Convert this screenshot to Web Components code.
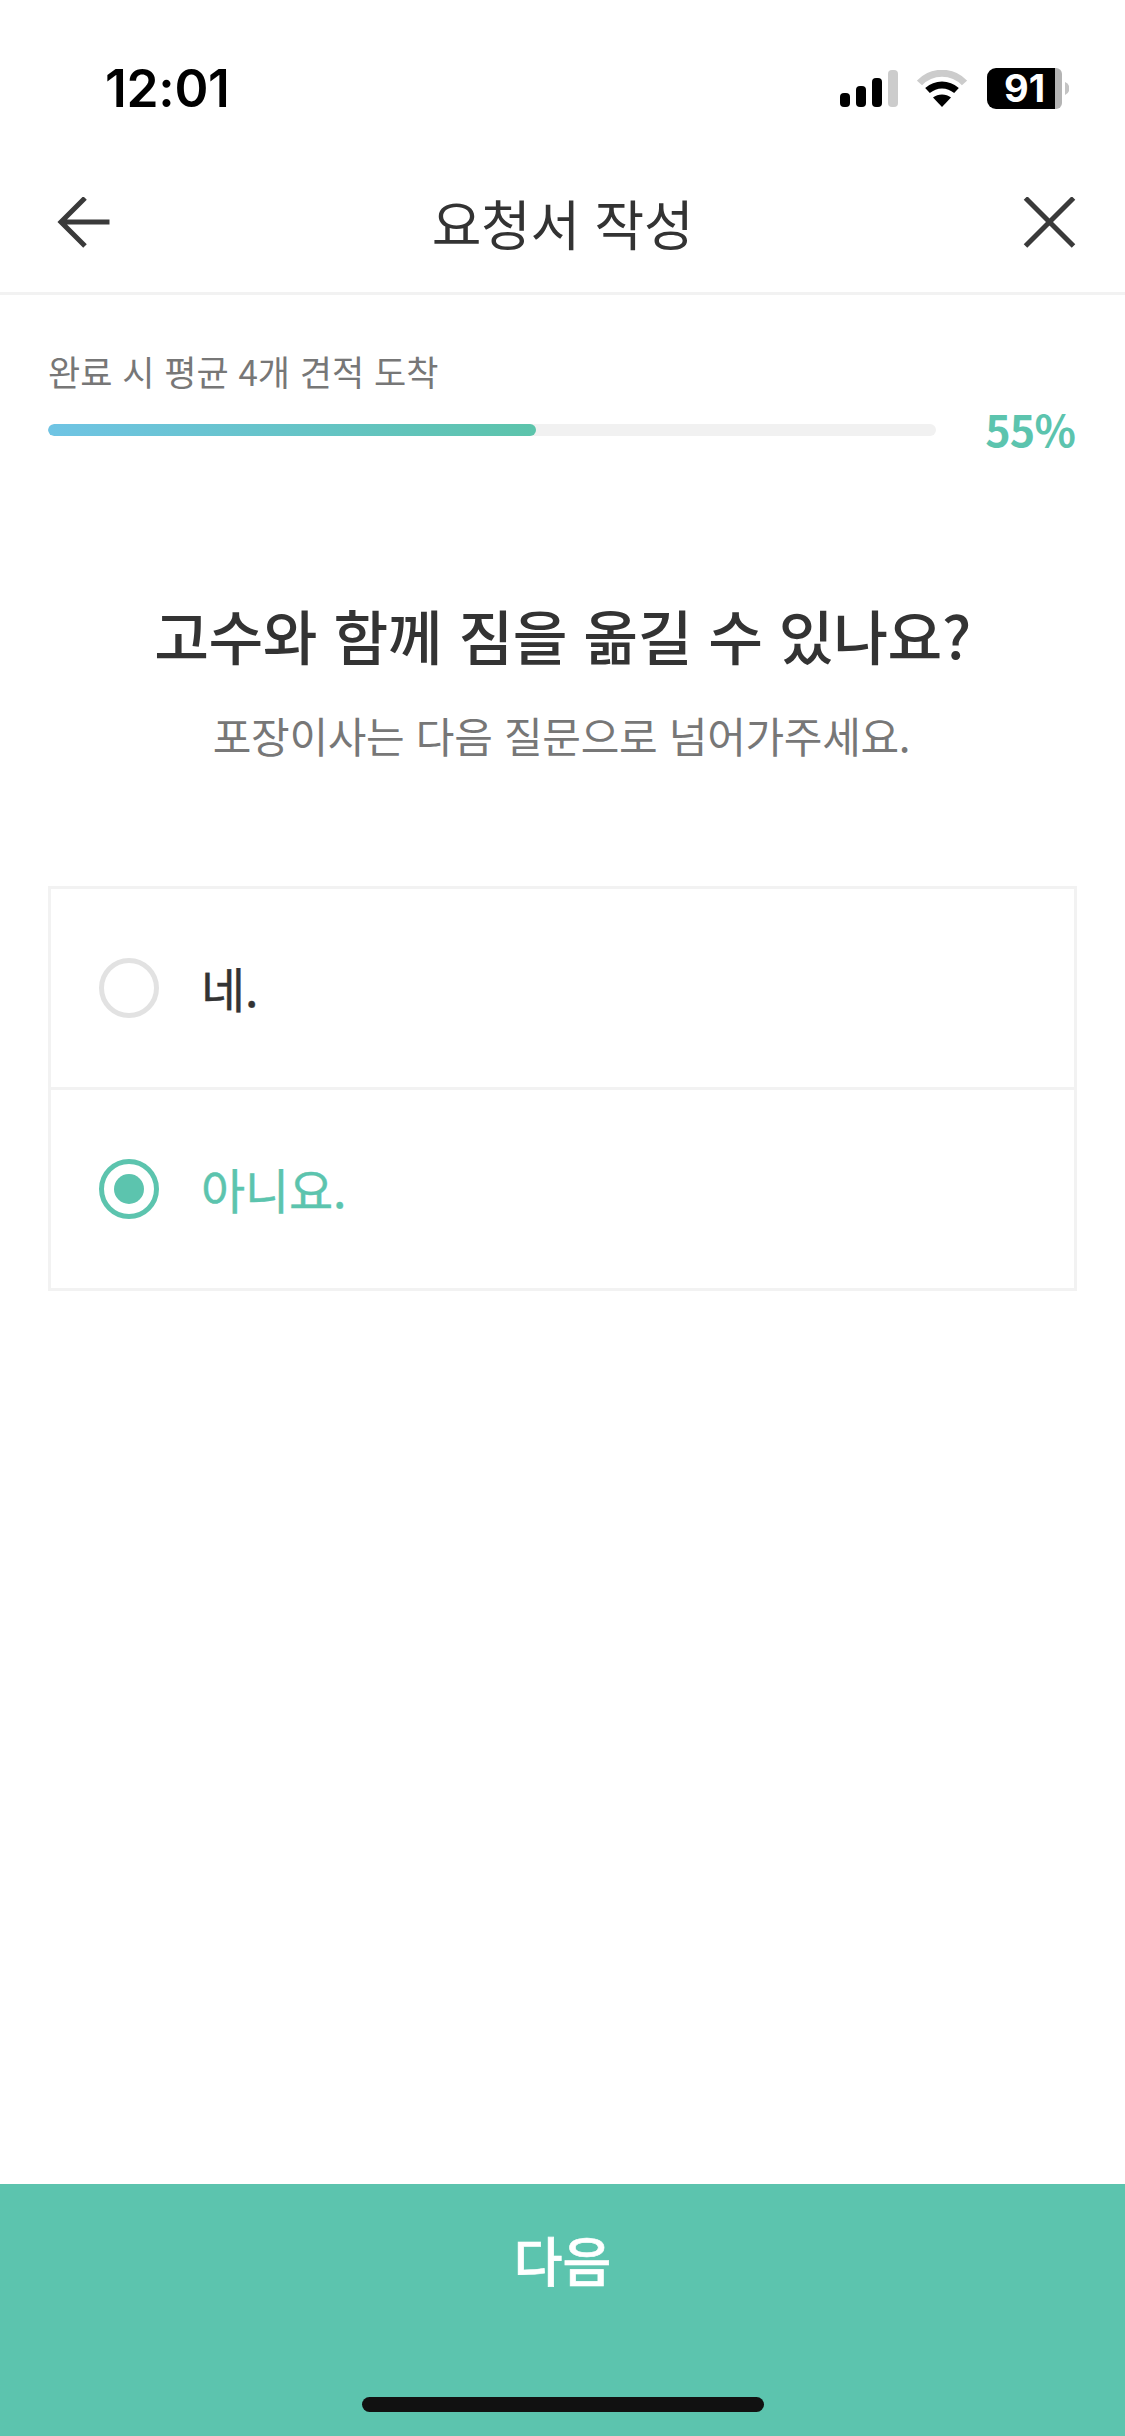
<!DOCTYPE html>
<html lang="ko"><head><meta charset="utf-8"><title>요청서 작성</title>
<style>
html,body{margin:0;padding:0;background:#fff}
body{width:1125px;height:2436px;font-family:"Noto Sans CJK KR","Noto Sans",sans-serif;overflow:hidden}
app-page{height:2436px}
</style></head><body>
<app-page>
  <status-bar time="12:01" battery="91"></status-bar>
  <nav-header>요청서 작성</nav-header>
  <progress-panel label="완료 시 평균 4개 견적 도착" value="55"></progress-panel>
  <question-block heading="고수와 함께 짐을 옮길 수 있나요?" sub="포장이사는 다음 질문으로 넘어가주세요."></question-block>
  <option-list>
    <option-row>네.</option-row>
    <option-row selected>아니요.</option-row>
  </option-list>
  <bottom-cta>다음</bottom-cta>
</app-page>
<script>
function def(name, css, html){
  customElements.define(name, class extends HTMLElement{
    connectedCallback(){
      if(this.shadowRoot) return;
      const r=this.attachShadow({mode:'open'});
      r.innerHTML='<style>'+css+'</style>'+(typeof html==='function'?html(this):html);
    }
  });
}
def('app-page',':host{display:flex;flex-direction:column;width:1125px;background:#fff}','<slot></slot>');
def('status-bar',`
 :host{display:flex;align-items:center;height:176px;box-sizing:border-box;padding:0 56px 0 105px;color:#000;flex:none}
 .in{display:flex;align-items:center;width:100%;height:41px}
 .t{font:600 51.5px/41px Inter,"Liberation Sans",sans-serif;letter-spacing:-.3px;margin-right:auto}
 svg{display:block}
 .bat{position:relative;width:82px;height:41px;margin-left:20px}
 .bat span{position:absolute;left:0;width:75px;top:0;height:41px;text-align:center;color:#fff;font:700 38px/41px Inter,"Liberation Sans",sans-serif;letter-spacing:0}
`,h=>`<div class="in"><span class="t">${h.getAttribute('time')}</span>
 <svg width="58" height="37" viewBox="0 0 58 37"><rect x="0" y="23" width="10" height="14" rx="4"/><rect x="16" y="16" width="10" height="21" rx="4"/><rect x="32" y="8" width="10" height="29" rx="4"/><rect x="48" y="0" width="10" height="37" rx="4" fill="#ccc"/></svg>
 <svg width="50" height="37" viewBox="0 0 50 37" style="margin-left:19px"><path d="M2.5 13C14.5 0 35.500 0 47.500 13" fill="none" stroke="#ccc" stroke-width="7"/><path d="M10.500 20.500C19 13 31 13 39.500 20.500" fill="none" stroke="#000" stroke-width="7"/><path d="M25 37L16 27.500C21 23.500 29 23.500 34 27.500Z"/></svg>
 <div class="bat"><svg width="82" height="41" viewBox="0 0 82 41"><path d="M68 0h1a6 6 0 0 1 6 6v29a6 6 0 0 1-6 6h-1z" fill="#b4b4b4"/><path d="M9 0h59v41H9a9 9 0 0 1-9-9V9a9 9 0 0 1 9-9z"/><path d="M78 14a7 7 0 0 1 0 13z" fill="#c4c4c4"/></svg><span>${h.getAttribute('battery')}</span></div></div>`);
def('nav-header',`
 :host{display:flex;align-items:center;justify-content:space-between;box-sizing:border-box;height:119px;padding:0 48px 22px 48px;border-bottom:3px solid #f2f2f2;flex:none}
 .t{font:400 54px/70px "Noto Sans CJK KR",sans-serif;color:#333;letter-spacing:-.3px}
 svg{display:block;fill:none;stroke:#3a3a3a;stroke-width:5}
`,`<svg width="62" height="52" viewBox="-10 1 62 52"><path d="M51.500 26H3M27 2L3 26l24 24"/></svg><span class="t"><slot></slot></span><svg width="62" height="52" viewBox="-8.500 1 62 52"><path d="M2 2l48 48M50 2L2 50"/></svg>`);
def('progress-panel',`
 :host{display:block;box-sizing:border-box;padding:48px 50px 0 48px;height:210px;flex:none}
 .l{font:400 35px/56px "Noto Sans CJK KR",sans-serif;color:#777;height:56px}
 .row{display:flex;align-items:center;justify-content:space-between;height:44px;margin-top:10px}
 .track{width:888px;height:12px;border-radius:6px;background:#f1f1f1;overflow:hidden;margin-top:-2px}
 .fill{height:100%;border-radius:6px;background:linear-gradient(90deg,#6fc4e4,#5cc4ab)}
 .v{font:600 43px/44px "Noto Sans CJK KR",sans-serif;color:#5cc4ae;letter-spacing:-.8px;margin-top:-6px}
`,h=>`<div class="l">${h.getAttribute('label')}</div><div class="row"><div class="track"><div class="fill" style="width:${h.getAttribute('value')}%"></div></div><span class="v">${h.getAttribute('value')}%</span></div>`);
def('question-block',`
 :host{display:block;text-align:center;height:381px;box-sizing:border-box;padding-top:87px;flex:none}
 .h{font:500 59.500px/84px "Noto Sans CJK KR",sans-serif;color:#333;letter-spacing:-.4px}
 .s{font:400 42px/60px "Noto Sans CJK KR",sans-serif;color:#777;margin-top:29px;letter-spacing:-.3px;padding-right:2px}
`,h=>`<div class="h">${h.getAttribute('heading')}</div><div class="s">${h.getAttribute('sub')}</div>`);
def('option-list',`
 :host{display:block;margin:0 48px;border:3px solid #f2f2f2;flex:none}
 ::slotted(option-row:not(:last-child)){border-bottom:3px solid #f2f2f2}
`,'<slot></slot>');
def('option-row',`
 :host{display:flex;align-items:center;box-sizing:border-box;height:201px;padding-left:48px;color:#333;font:400 48px/70px "Noto Sans CJK KR",sans-serif;gap:42px;-webkit-text-stroke:.4px currentColor}
 :host(:last-child){height:198px}
 :host([selected]){color:#5cc4ae}
 .r{width:60px;height:60px;box-sizing:border-box;border:5px solid #e2e2e2;border-radius:50%;display:flex;align-items:center;justify-content:center;flex:none}
 :host([selected]) .r{border-color:#5cc4ae}
 :host([selected]) .r::after{content:"";width:30px;height:30px;border-radius:50%;background:#5cc4ae}
 .x{letter-spacing:-.2px;margin-top:-3px}
`,`<span class="r"></span><span class="x"><slot></slot></span>`);
def('bottom-cta',`
 :host{display:flex;flex-direction:column;align-items:center;box-sizing:border-box;margin-top:auto;height:252px;background:#5cc4ae;color:#fff;flex:none;padding-top:35px}
 .t{font:500 53px/80px "Noto Sans CJK KR",sans-serif;-webkit-text-stroke:.6px #fff}
 .home{width:402px;height:15px;border-radius:8px;background:#111;margin-top:98px}
`,`<span class="t"><slot></slot></span><div class="home"></div>`);
</script>
</body></html>
